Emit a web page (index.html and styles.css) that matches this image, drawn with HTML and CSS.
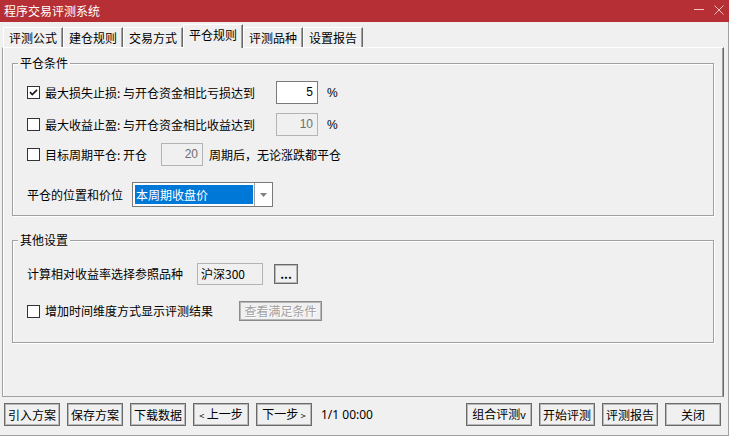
FILE: index.html
```html
<!DOCTYPE html>
<html lang="zh-CN">
<head>
<meta charset="utf-8">
<title>程序交易评测系统</title>
<link rel="stylesheet" href="styles.css">
</head>
<body>
<div class="window">
  <div class="titlebar">
    <span class="title">程序交易评测系统</span>
    <div class="controls">
      <svg class="ctl" width="10" height="10" viewBox="0 0 10 10"><line x1="0" y1="4.5" x2="10" y2="4.5"/></svg>
      <svg class="ctl" width="10" height="10" viewBox="0 0 10 10"><path d="M0.5 0.5 L9.5 9.5 M9.5 0.5 L0.5 9.5"/></svg>
    </div>
  </div>
  <div class="client">
    <div class="tabs">
      <div class="tab">评测公式</div>
      <div class="tab">建仓规则</div>
      <div class="tab">交易方式</div>
      <div class="tab active">平仓规则</div>
      <div class="tab">评测品种</div>
      <div class="tab">设置报告</div>
    </div>
    <div class="panel">
      <div class="group g1">
        <span class="legend">平仓条件</span>
        <div class="row r1">
          <span class="cb"><svg width="11" height="11" viewBox="0 0 11 11"><path d="M2 5.2 L4.3 7.6 L9 2.8"/></svg></span>
          <span class="label w-loss">最大损失止损: 与开仓资金相比亏损达到</span>
          <span class="field">5</span>
          <span class="unit">%</span>
        </div>
        <div class="row r2">
          <span class="cb"></span>
          <span class="label w-loss">最大收益止盈: 与开仓资金相比收益达到</span>
          <span class="field disabled">10</span>
          <span class="unit">%</span>
        </div>
        <div class="row r3">
          <span class="cb"></span>
          <span class="label w-period">目标周期平仓: 开仓</span>
          <span class="field disabled">20</span>
          <span class="after">周期后，无论涨跌都平仓</span>
        </div>
        <div class="row r4 flush">
          <span class="label w-pos">平仓的位置和价位</span>
          <div class="select">
            <span class="sel-val">本周期收盘价</span>
            <span class="sel-btn"><svg width="7" height="4" viewBox="0 0 7 4"><path d="M0 0 H7 L3.5 4 Z"/></svg></span>
          </div>
        </div>
      </div>
      <div class="group g2">
        <span class="legend">其他设置</span>
        <div class="row r5 flush">
          <span class="label w-ref">计算相对收益率选择参照品种</span>
          <span class="refbox">沪深300</span>
          <button class="btn dots">...</button>
        </div>
        <div class="row r6">
          <span class="cb"></span>
          <span class="label w-time">增加时间维度方式显示评测结果</span>
          <button class="btn btn-off">查看满足条件</button>
        </div>
      </div>
    </div>
    <div class="toolbar">
      <button class="btn tb">引入方案</button>
      <button class="btn tb">保存方案</button>
      <button class="btn tb">下载数据</button>
      <button class="btn tb"><span class="arr">&lt;</span> 上一步</button>
      <button class="btn tb">下一步 <span class="arr">&gt;</span></button>
      <span class="status">1/1 00:00</span>
      <div class="tb-right">
        <button class="btn tb wide">组合评测<span class="vee">v</span></button>
        <button class="btn tb">开始评测</button>
        <button class="btn tb">评测报告</button>
        <button class="btn tb">关闭</button>
      </div>
    </div>
  </div>
</div>
</body>
</html>
```
FILE: styles.css
```css
html, body {
  margin: 0;
  padding: 0;
  background: #f0f0f0;
}
body {
  font-family: "Noto Sans CJK SC", "Noto Sans", sans-serif;
  font-size: 12px;
  color: #000;
}
.window {
  width: 729px;
  height: 436px;
  display: flex;
  flex-direction: column;
  background: #f0f0f0;
  overflow: hidden;
}
.titlebar {
  height: 22px;
  flex: none;
  background: #b52f35;
  display: flex;
  align-items: flex-start;
  padding: 0 5px 0 4px;
  box-sizing: border-box;
}
.title {
  color: #fff;
  line-height: 22px;
  font-size: 12px;
}
.controls {
  margin-left: auto;
  margin-top: 5px;
  display: flex;
  gap: 10px;
}
.ctl line, .ctl path {
  stroke: #f2c4c6;
  stroke-width: 1;
  fill: none;
}
.client {
  flex: 1;
  display: flex;
  flex-direction: column;
  border-right: 1px solid #a0a0a0;
  border-bottom: 1px solid #a0a0a0;
}
.tabs {
  height: 25px;
  flex: none;
  display: flex;
  align-items: flex-end;
  padding-left: 3px;
}
.tab {
  width: 60px;
  height: 20px;
  box-sizing: border-box;
  border-top: 1px solid #fff;
  border-left: 1px solid #fff;
  border-right: 1px solid #696969;
  box-shadow: inset -1px 0 0 #a0a0a0;
  display: flex;
  align-items: center;
  justify-content: center;
  line-height: 16px;
}
.tab.active {
  height: 24px;
  margin-bottom: -1px;
  background: #f0f0f0;
  position: relative;
  z-index: 1;
  padding-bottom: 3px;
}
.panel {
  height: 350px;
  flex: none;
  box-sizing: border-box;
  margin: 0 4px 0 2px;
  border-top: 1px solid #fff;
  border-left: 1px solid #a0a0a0;
  border-right: 1px solid #696969;
  border-bottom: 1px solid #a0a0a0;
  box-shadow: inset -1px 0 0 #a0a0a0, inset 1px 0 0 #fff;
  display: flex;
  flex-direction: column;
}
.group {
  width: 702px;
  box-sizing: border-box;
  margin-left: 9px;
  border: 1px solid #a0a0a0;
  box-shadow: 1px 1px 0 #fff, inset 1px 1px 0 #fff;
  display: flex;
  flex-direction: column;
}
.g1 {
  margin-top: 15px;
  height: 153px;
}
.g2 {
  margin-top: 24px;
  height: 103px;
}
.legend {
  align-self: flex-start;
  margin: -9px 0 0 5px;
  padding: 0 2px;
  background: #f0f0f0;
  line-height: 16px;
}
.row {
  display: flex;
  align-items: center;
  margin-left: 14px;
  height: 23px;
}
.r1 { margin-top: 10px; }
.r2 { margin-top: 9px; }
.r3 { margin-top: 7px; }
.r4 { margin-top: 16px; height: 25px; }
.r5 { margin-top: 15px; height: 22px; }
.r6 { margin-top: 16px; height: 20px; }
.label {
  line-height: 16px;
  white-space: nowrap;
}
.w-loss { width: 231px; }
.w-period { width: 116px; }
.w-pos { width: 105px; }
.w-ref { width: 170px; }
.w-time { width: 194px; }
.cb {
  width: 13px;
  height: 13px;
  box-sizing: border-box;
  border: 1px solid #333;
  background: #fff;
  margin-right: 5px;
  display: flex;
  flex: none;
}
.cb path {
  fill: none;
  stroke: #1a1a1a;
  stroke-width: 1.7;
}
.field {
  width: 42px;
  height: 23px;
  box-sizing: border-box;
  border: 1px solid #7a7a7a;
  background: #fff;
  text-align: right;
  padding-right: 4px;
  line-height: 21px;
  font-family: "Liberation Sans", "Noto Sans", sans-serif;
  font-size: 12px;
}
.field.disabled {
  background: #f0f0f0;
  border-color: #b4b4b4;
  color: #6d6d6d;
}
.unit {
  margin-left: 9px;
  font-family: "Liberation Sans", sans-serif;
}
.after {
  margin-left: 6px;
  line-height: 16px;
}
.select {
  width: 141px;
  height: 25px;
  box-sizing: border-box;
  border: 1px solid #7a7a7a;
  background: #fff;
  display: flex;
}
.sel-val {
  flex: 1;
  margin: 2px 1px 2px 2px;
  background: #0078d7;
  color: #fff;
  line-height: 19px;
  padding-left: 1px;
}
.sel-btn {
  width: 17px;
  border-left: 1px solid #a0a0a0;
  display: flex;
  align-items: center;
  justify-content: center;
}
.sel-btn path {
  fill: #808080;
}
.refbox {
  width: 66px;
  height: 22px;
  box-sizing: border-box;
  border: 1px solid #b4b4b4;
  background: #f0f0f0;
  padding-left: 3px;
  line-height: 20px;
}
.btn {
  font-family: "Noto Sans CJK SC", "Noto Sans", sans-serif;
  font-size: 12px;
  color: #000;
  background: #f0f0f0;
  border: 1px solid #6a6a6a;
  box-shadow: inset 0 0 0 1px #b8b8b8;
  padding: 0;
  margin: 0;
  box-sizing: border-box;
  line-height: 16px;
  white-space: nowrap;
}
.dots {
  width: 24px;
  height: 20px;
  margin-left: 11px;
  font-weight: bold;
  line-height: 12px;
}
.btn-off {
  width: 83px;
  height: 20px;
  color: #a0a0a0;
  border-color: #8a8a8a;
  text-shadow: 1px 1px 0 #fff;
}
.toolbar {
  flex: 1;
  display: flex;
  align-items: flex-start;
  padding: 6px 7px 0 4px;
  gap: 7px;
}
.tb {
  width: 56px;
  height: 23px;
}
.tb.wide {
  width: 66px;
}
.arr {
  font-size: 9px;
}
.vee {
  font-family: "Liberation Sans", sans-serif;
  font-size: 11px;
}
.status {
  margin-left: 2px;
  line-height: 23px;
  font-family: "Noto Sans", sans-serif;
  font-size: 12px;
}
.tb-right {
  margin-left: auto;
  display: flex;
  gap: 7px;
}
```
